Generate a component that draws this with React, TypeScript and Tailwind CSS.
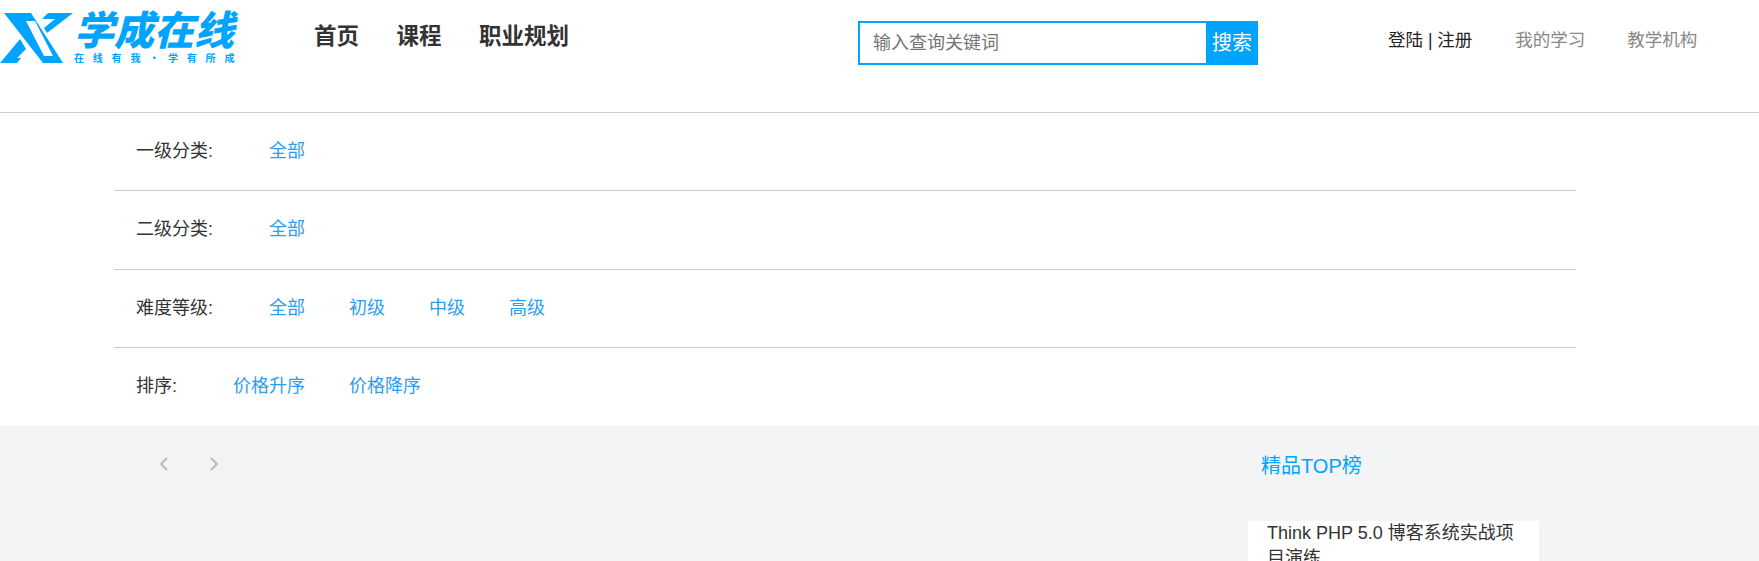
const sans = "font-['Liberation_Sans','Noto_Sans_CJK_SC',sans-serif]";

const filters = [
  { label: "一级分类:", options: ["全部"] },
  { label: "二级分类:", options: ["全部"] },
  { label: "难度等级:", options: ["全部", "初级", "中级", "高级"] },
  { label: "排序:", options: ["价格升序", "价格降序"] },
];

const Logo = () => (
  <div className="flex items-start w-[236px] h-[56px]">
    <svg width="73" height="56" viewBox="0 0 73 56" className="shrink-0">
      <path d="M4 5H31L63 55H43Z M26 13H35L53 48H44Z" fill="#00a4ff" fillRule="evenodd" />
      <path d="M48 5H73L47 25L44 20L55 11H42Z" fill="#00a4ff" />
      <path d="M0 55L20 31L26 41L17 50H21L17 55Z" fill="#00a4ff" />
    </svg>
    <div className="flex flex-col ml-[1px] text-[#00a4ff] font-['Noto_Sans_CJK_SC',sans-serif]">
      <span className="font-black italic text-[40px] leading-[40px] whitespace-nowrap">学成在线</span>
      <span className="font-bold text-[10px] leading-[12px] mt-[4px] tracking-[8.8px] whitespace-nowrap">
        在线有我·学有所成
      </span>
    </div>
  </div>
);

export default function App() {
  return (
    <div className={`h-[561px] overflow-hidden bg-white ${sans}`}>
      <header className="h-[113px] border-b border-[#ccc] flex items-start whitespace-nowrap">
        <div className="pt-[8px] shrink-0">
          <Logo />
        </div>
        <nav className="flex shrink-0 gap-[37.5px] ml-[78px] pt-[21px] text-[22.5px] leading-[32px] font-bold text-[#333]">
          <a>首页</a>
          <a>课程</a>
          <a>职业规划</a>
        </nav>
        <div className="flex shrink-0 ml-[289px] mt-[21px] w-[400px] h-[44px]">
          <input
            placeholder="输入查询关键词"
            className="flex-1 min-w-0 border-2 border-r-0 border-[#00a4ff] pl-[13px] text-[18px] outline-none placeholder:text-[#757575]"
          />
          <button className="w-[52px] bg-[#00a4ff] text-white text-[20px]">搜索</button>
        </div>
        <div className="flex shrink-0 ml-[130px] pt-[26px] text-[17.5px] leading-[28px]">
          <span className="text-[#222]">登陆 | 注册</span>
          <span className="ml-[43px] text-[#888]">我的学习</span>
          <span className="ml-[42px] text-[#888]">教学机构</span>
        </div>
      </header>

      <section className="ml-[114px] w-[1462px]">
        {filters.map((row, i) => (
          <div
            key={row.label}
            className={`h-[78.25px] flex items-center gap-[56px] pl-[22px] text-[18px] ${i < 3 ? "border-b border-[#ccc]" : ""}`}
          >
            <span className="text-[#333] whitespace-nowrap">{row.label}</span>
            <div className="flex gap-[44px] text-[#2a9df4]">
              {row.options.map((o) => (
                <a key={o}>{o}</a>
              ))}
            </div>
          </div>
        ))}
      </section>

      <section className="bg-[#f3f4f6] h-[135px] flex">
        <div className="flex gap-[12px] ml-[145px] mt-[21px] h-[34px]">
          <button className="w-[38px] h-[34px] bg-[#f3f3f3] flex items-center justify-center">
            <svg width="10" height="14" viewBox="0 0 10 14" fill="none" stroke="#b5bdc9" strokeWidth="2">
              <path d="M8 1L2 7L8 13" />
            </svg>
          </button>
          <button className="w-[38px] h-[34px] bg-[#f3f3f3] flex items-center justify-center">
            <svg width="10" height="14" viewBox="0 0 10 14" fill="none" stroke="#b5bdc9" strokeWidth="2">
              <path d="M2 1L8 7L2 13" />
            </svg>
          </button>
        </div>
        <aside className="ml-[1015px] w-[291px]">
          <h3 className="pl-[13px] pt-[24px] text-[20px] leading-[32px] text-[#00a4ff]">精品TOP榜</h3>
          <div className="mt-[39px] bg-white pl-[19px] pr-[20px] text-[18px] leading-[25px] text-[#333]">
            Think PHP 5.0 博客系统实战项目演练
          </div>
        </aside>
      </section>
    </div>
  );
}
